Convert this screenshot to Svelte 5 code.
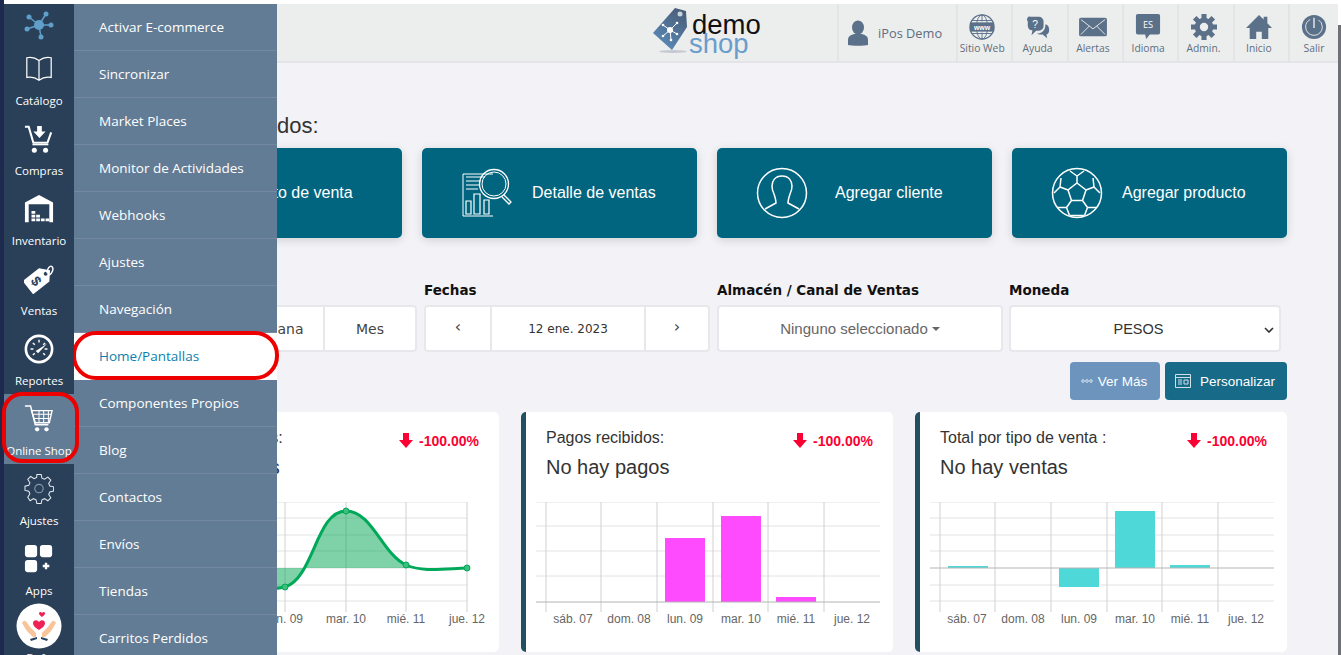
<script>
  const rail = [
    { label: 'Catálogo', icon: 'book' },
    { label: 'Compras', icon: 'buy' },
    { label: 'Inventario', icon: 'store' },
    { label: 'Ventas', icon: 'tag' },
    { label: 'Reportes', icon: 'gauge' },
    { label: 'Online Shop', icon: 'cart', active: true },
    { label: 'Ajustes', icon: 'gear' },
    { label: 'Apps', icon: 'apps' }
  ];

  const submenu = [
    'Activar E-commerce',
    'Sincronizar',
    'Market Places',
    'Monitor de Actividades',
    'Webhooks',
    'Ajustes',
    'Navegación',
    'Home/Pantallas',
    'Componentes Propios',
    'Blog',
    'Contactos',
    'Envíos',
    'Tiendas',
    'Carritos Perdidos'
  ];

  const topItems = [
    { label: 'Sitio Web', icon: 'globe' },
    { label: 'Ayuda', icon: 'help' },
    { label: 'Alertas', icon: 'mail' },
    { label: 'Idioma', icon: 'lang' },
    { label: 'Admin.', icon: 'cog' },
    { label: 'Inicio', icon: 'home' },
    { label: 'Salir', icon: 'power' }
  ];

  const shortcuts = [
    { label: 'Punto de venta', icon: 'pos' },
    { label: 'Detalle de ventas', icon: 'report' },
    { label: 'Agregar cliente', icon: 'user' },
    { label: 'Agregar producto', icon: 'ball' }
  ];

  const days = ['sáb. 07', 'dom. 08', 'lun. 09', 'mar. 10', 'mié. 11', 'jue. 12'];
  const lineX = [32, 92.5, 153, 214, 274, 335];
  const barTicks = [47, 103, 159, 215, 270, 326];
  const barGrid = [20, 75, 131, 187, 242, 298];

  const charts = [
    { title: 'Ventas realizadas:', empty: 'No hay ventas', kind: 'line' },
    {
      title: 'Pagos recibidos:',
      empty: 'No hay pagos',
      kind: 'bars',
      color: '#fd4bfd',
      bars: [[139, 36, 64], [195, 14, 86], [250, 95, 5]],
      lines: [0, 24, 49, 74],
      base: 100
    },
    {
      title: 'Total por tipo de venta :',
      empty: 'No hay ventas',
      kind: 'bars',
      color: '#4fd8d8',
      bars: [[28, 64, 2], [139, 66, 19], [195, 9, 57], [250, 63, 3]],
      lines: [0, 16, 33, 49, 83, 99],
      base: 66
    }
  ];

  const curve = 'M32 66C60 66 70 70 92 78C110 85 130 90 153 85C182 76 184 9 214 9C240 9 250 52 274 63C290 70 310 67 335 66';
  const ballLines = 'M25 15l9 7-3.500 10.500h-11L16 22zM25 15V8M34 22l8-3M30.500 32.500l5 7M19.500 32.500l-5 7M16 22l-8-3M25 8l-7-5M25 8l7-5M42 19l-1-9M42 19l6 6M8 19l1-9M8 19l-6 6M35.500 39.500H45M14.500 39.500H5M35.500 39.500l-3 8M14.500 39.500l3 8M18 47.500h14';
</script>

<div class="page">
  <div class="edge"></div>
  <div class="edge-right"></div>

  <nav class="rail">
    <svg class="logo" viewBox="0 0 32 32" width="32" height="32">
      <g stroke="#5f9fca" stroke-width="1.500">
        <line x1="16" y1="16" x2="23" y2="5" />
        <line x1="16" y1="16" x2="6" y2="8" />
        <line x1="16" y1="16" x2="28" y2="16" />
        <line x1="16" y1="16" x2="4" y2="20" />
        <line x1="16" y1="16" x2="18" y2="28" />
      </g>
      <g fill="#5f9fca">
        <circle cx="16" cy="16" r="5" />
        <circle cx="23" cy="5" r="2.500" />
        <circle cx="6" cy="8" r="2.500" />
        <circle cx="28" cy="16" r="2.500" />
        <circle cx="4" cy="20" r="2.500" />
        <circle cx="18" cy="28" r="2.500" />
      </g>
    </svg>

    {#each rail as item}
      <div class="rail-item" class:active={item.active}>
        <svg viewBox="0 0 32 32" width="30" height="30">
          {#if item.icon === 'book'}
            <path d="M16 7C12 4 7 3 3 4v21c5-1 9 0 13 3 4-3 8-4 13-3V4c-4-1-9 0-13 3zM16 7v21" fill="none" stroke="#fff" stroke-width="1.300" />
          {:else if item.icon === 'buy'}
            <path d="M1 3h4l5 17h15l4-11" fill="none" stroke="#fff" stroke-width="2.200" />
            <path d="M14 2h5v6h4l-6.500 7L10 8h4z" fill="#fff" />
            <path d="M9 22h17" stroke="#fff" stroke-width="1.500" />
            <circle cx="11" cy="28" r="2.700" fill="#fff" />
            <circle cx="23" cy="28" r="2.700" fill="#fff" />
          {:else if item.icon === 'store'}
            <path d="M1 30V9L16 1l15 8v21h-4V11H5v19z" fill="#fff" />
            <path d="M8 18h4v3H8zM8 22h4v3H8zM8 26h4v3H8zM13 22h4v3h-4zM13 26h4v3h-4zM18 26h4v3h-4zM23 26h4v3h-4z" fill="#fff" />
          {:else if item.icon === 'tag'}
            <g transform="rotate(-38 16 16)">
              <path d="M31 16l-8-9H1v18h22z" fill="#fff" />
              <circle cx="25" cy="16" r="2" fill="#2a4058" />
              <text x="12" y="21" font-size="15" font-weight="700" fill="#2a4058" text-anchor="middle" font-family="Liberation Sans, sans-serif" transform="rotate(90 12 16)">$</text>
            </g>
            <path d="M25 10c-1-5 3-9 5-7 2 2 0 7-3 9" fill="none" stroke="#fff" stroke-width="1.600" />
          {:else if item.icon === 'gauge'}
            <circle cx="16" cy="16" r="14" fill="none" stroke="#fff" stroke-width="2.800" />
            <path d="M16 6v3M7 16h3M25 16h-3M9.500 9.500l2 2M22.500 9.500l-2 2M9.500 22.500l2-2M22.500 22.500l-2-2" stroke="#fff" stroke-width="1.500" />
            <path d="M12.500 18l12-7.500-9.500 10z" fill="#fff" />
          {:else if item.icon === 'cart'}
            <path d="M1 2h6l5 20h14" fill="none" stroke="#fff" stroke-width="1.600" />
            <path d="M8 7h22l-3 13H12z" fill="none" stroke="#fff" stroke-width="1.400" />
            <path d="M10 11h19M11 15.500h17M16 7v13M21 7v13M26 7v13" stroke="#fff" stroke-width="1.100" />
            <circle cx="14" cy="27" r="2.300" fill="#fff" />
            <circle cx="24" cy="27" r="2.300" fill="#fff" />
          {:else if item.icon === 'gear'}
            <path d="M13.500 1h5l1 4.500 3 1.300 4-2.500 3.500 3.500-2.500 4 1.300 3 4.500 1v5l-4.500 1-1.300 3 2.500 4-3.500 3.500-4-2.500-3 1.300-1 4.500h-5l-1-4.500-3-1.300-4 2.500L2.700 28l2.500-4-1.300-3L-.6 20v-5l4.500-1 1.300-3-2.500-4L6.200 3.500l4 2.500 3-1.300z" transform="translate(1.600 -.5) scale(.9)" fill="none" stroke="#e8edf2" stroke-width="1.200" />
            <circle cx="16" cy="15.500" r="4.500" fill="none" stroke="#8a9aab" stroke-width="1.200" />
          {:else if item.icon === 'apps'}
            <rect x="1" y="1" width="13" height="13" rx="3" fill="#fff" />
            <rect x="17" y="1" width="13" height="13" rx="3" fill="#fff" />
            <rect x="1" y="17" width="13" height="13" rx="3" fill="#fff" />
            <path d="M20 23.500h7M23.500 20v7" stroke="#fff" stroke-width="2.500" />
          {/if}
        </svg>
        <span>{item.label}</span>
      </div>
    {/each}

    <div class="promo">
      <svg viewBox="0 0 46 46" width="46" height="46">
        <circle cx="23" cy="23" r="22.500" fill="#fff" />
        <path d="M6 20c2 3 4 8 8 11l3 3h3v-4c-2-3-6-5-8-9-2-3-4-5-6-1zM40 20c-2 3-4 8-8 11l-3 3h-3v-4c2-3 6-5 8-9 2-3 4-5 6-1z" fill="#f8c49a" />
        <path d="M14 36l7-2v2l-6 2zM32 36l-7-2v2l6 2z" fill="#2a4058" />
        <path d="M23 27c-3-2-6-4-6-7 0-3 4-4 6-1 2-3 6-2 6 1 0 3-3 5-6 7z" fill="#ee2255" />
        <path d="M26 14c-1-1-3-2-3-3.500 0-1.500 2-2 3-.5 1-1.500 3-1 3 .5S27 13 26 14z" fill="#ee2255" />
      </svg>
      <span>Bofu</span>
    </div>
  </nav>

  <div class="workspace">
    <header class="topbar">
      <div class="brand">
        <svg viewBox="0 0 36 50" width="36" height="50">
          <defs>
            <linearGradient id="tagfill" x1="0.800" y1="0" x2="0.200" y2="1">
              <stop offset="0" stop-color="#4a5d77" />
              <stop offset="1" stop-color="#5a8dbd" />
            </linearGradient>
          </defs>
          <ellipse cx="21" cy="44.500" rx="14" ry="1.500" fill="#c6c8d2" />
          <path d="M23 1l11 3 1 16-15 23L1 26z" fill="url(#tagfill)" />
          <circle cx="28" cy="7" r="2.500" fill="#c9d3dd" />
          <g stroke="#fff" stroke-width="1">
            <line x1="18" y1="23" x2="25" y2="16" />
            <line x1="18" y1="23" x2="11" y2="18" />
            <line x1="18" y1="23" x2="25" y2="27" />
            <line x1="18" y1="23" x2="11" y2="29" />
            <line x1="18" y1="23" x2="19" y2="33" />
          </g>
          <circle cx="18" cy="23" r="3" fill="#fff" />
          <circle cx="25" cy="16" r="1.300" fill="#fff" />
          <circle cx="11" cy="18" r="1.300" fill="#fff" />
          <circle cx="25" cy="27" r="1.300" fill="#fff" />
          <circle cx="11" cy="29" r="1.300" fill="#fff" />
          <circle cx="19" cy="33" r="1.300" fill="#fff" />
        </svg>
        <div class="brand-text">
          <span class="demo">demo</span>
          <span class="shop">shop</span>
        </div>
      </div>

      <div class="top-right">
        <div class="top-user">
          <svg viewBox="0 0 20 26" width="20" height="26">
            <ellipse cx="10" cy="7.500" rx="6" ry="7" fill="#5b7089" />
            <path d="M0 25v-5c0-4 3-5 6-6h8c3 1 6 2 6 6v5c-3 1-17 1-20 0z" fill="#5b7089" />
          </svg>
          <span>iPos Demo</span>
        </div>
        {#each topItems as item}
          <div class="top-item">
            <svg viewBox="0 0 28 28" width="26" height="26">
              {#if item.icon === 'globe'}
                <circle cx="14" cy="14" r="13" fill="none" stroke="#5b7089" stroke-width="1.300" />
                <ellipse cx="14" cy="14" rx="6" ry="13" fill="none" stroke="#5b7089" />
                <path d="M14 1v7M14 20v7M3 7h22M3 21h22" stroke="#5b7089" />
                <rect x="1" y="9" width="26" height="10" fill="#5b7089" />
                <text x="14" y="17" font-size="7.500" font-weight="700" fill="#fff" text-anchor="middle" font-family="Liberation Sans, sans-serif">www</text>
              {:else if item.icon === 'help'}
                <path d="M6 3h9a5 5 0 0 1 5 5v5a5 5 0 0 1-5 5h-3l-5 5 1-5.500A5 5 0 0 1 3 13V8a3 3 0 0 1 3-5z" fill="#5b7089" />
                <path d="M22 11c3 1 4 3 4 6s-1 5-3 5l1 4-5-4h-3c-2 0-3-1-3-1 5 0 9-3 9-10z" fill="#5b7089" />
                <text x="11" y="15" font-size="11" fill="#fff" text-anchor="middle" font-family="Liberation Sans, sans-serif">?</text>
              {:else if item.icon === 'mail'}
                <rect x="-1" y="4" width="30" height="20" rx="2" fill="#5b7089" />
                <path d="M1 6l13 10L27 6M1 22l9-9M27 22l-9-9" fill="none" stroke="#eceded" stroke-width="1" />
              {:else if item.icon === 'lang'}
                <path d="M3 0h22a2 2 0 0 1 2 2v18a2 2 0 0 1-2 2H16l-4 5-1-5H3a2 2 0 0 1-2-2V2a2 2 0 0 1 2-2z" fill="#5b7089" />
                <text x="14" y="15" font-size="10" fill="#fff" text-anchor="middle" font-family="'Open Sans', sans-serif">ES</text>
              {:else if item.icon === 'cog'}
                <path d="M14 0v28M0 14h28M4 4l20 20M4 24L24 4" stroke="#5b7089" stroke-width="5.500" />
                <circle cx="14" cy="14" r="10" fill="#5b7089" />
                <circle cx="14" cy="14" r="4.500" fill="#eceded" />
              {:else if item.icon === 'home'}
                <path d="M14 1L0 15h4v12h7v-8h6v8h7V15h4l-5-5V3h-4v3z" fill="#5b7089" />
              {:else if item.icon === 'power'}
                <circle cx="14" cy="14" r="13" fill="#5b7089" />
                <circle cx="14" cy="14" r="9" fill="none" stroke="#eceded" stroke-width="1" stroke-dasharray="47 10" stroke-dashoffset="-5" transform="rotate(-90 14 14)" />
                <path d="M14 4v11" stroke="#eceded" stroke-width="1.500" />
              {/if}
            </svg>
            <span>{item.label}</span>
          </div>
        {/each}
      </div>
    </header>

    <main class="content">
      <h2>Accesos rápidos:</h2>

      <section class="shortcuts">
        {#each shortcuts as s}
          <div class="shortcut {s.icon}">
            <svg class="shortcut-icon" viewBox="0 0 52 52" width="52" height="52" fill="none" stroke="#fff">
              {#if s.icon === 'report'}
                <path d="M32 7H2v42h30" stroke-width="1" />
                <path d="M5 10h19M5 14h15M5 18h13M5 22h12" stroke-width="1" />
                <path d="M5 34h5v13H5zM13 27h6v20h-6zM23 33h5v14h-5z" stroke-width="1.200" />
                <circle cx="33" cy="17" r="14.500" stroke-width="1.300" />
                <circle cx="33" cy="17" r="12" stroke-width="1" />
                <path d="M43 28l7 7-2 2-7-7" stroke-width="1.300" />
              {:else if s.icon === 'user'}
                <circle cx="26" cy="26" r="24.500" stroke-width="1.500" />
                <path d="M26 9c-7 0-10 5-10 10 0 4 1 6 2 8 1 3 2 6 2 9l-11 6M26 9c7 0 10 5 10 10 0 4-1 6-2 8-1 3-2 6-2 9l11 6" stroke-width="1.500" />
              {:else if s.icon === 'ball'}
                <circle cx="26" cy="26" r="24.500" stroke-width="1.500" />
                <path d={ballLines} transform="translate(1 1)" stroke-width="1.500" />
              {:else}
                <path d="M6 10h40v26H6zM18 44h16M26 36v8" stroke-width="1.500" />
              {/if}
            </svg>
            <span>{s.label}</span>
          </div>
        {/each}
      </section>

      <section class="filters">
        <div class="filter f-range">
          <span class="flabel">Rango</span>
          <div class="box">
            <div class="cell">Día</div>
            <div class="cell">Semana</div>
            <div class="cell mes">Mes</div>
          </div>
        </div>
        <div class="filter f-date">
          <span class="flabel">Fechas</span>
          <div class="box">
            <div class="cell arrow">‹</div>
            <div class="cell date">12 ene. 2023</div>
            <div class="cell arrow">›</div>
          </div>
        </div>
        <div class="filter f-store">
          <span class="flabel">Almacén / Canal de Ventas</span>
          <div class="box plain">Ninguno seleccionado <i class="caret"></i></div>
        </div>
        <div class="filter f-money">
          <span class="flabel">Moneda</span>
          <div class="box plain money">
            PESOS
            <svg viewBox="0 0 10 6" width="10" height="6"><path d="M1 1l4 4 4-4" fill="none" stroke="#333" stroke-width="1.600" /></svg>
          </div>
        </div>
      </section>

      <section class="actions">
        <button class="more">
          <svg viewBox="0 0 12 4" width="12" height="4" fill="none" stroke="#d8e4ef" stroke-width="1">
            <circle cx="2" cy="2" r="1.300" />
            <circle cx="6" cy="2" r="1.300" />
            <circle cx="10" cy="2" r="1.300" />
          </svg>
          Ver Más
        </button>
        <button class="custom">
          <svg viewBox="0 0 16 14" width="16" height="14" fill="none" stroke="#cfe0e8" stroke-width="1">
            <path d="M.5.500h15v13H.5zM.5 3.500h15M3 6h4M3 8h4M3 10h4" />
            <path d="M9 6h4v4H9z" />
          </svg>
          Personalizar
        </button>
      </section>

      <section class="cards">
        {#each charts as c}
          <article class="card">
            <div class="card-top">
              <div>
                <div class="card-title">{c.title}</div>
                <div class="card-empty">{c.empty}</div>
              </div>
              <div class="delta">
                <svg viewBox="0 0 14 15" width="14" height="15"><path d="M4 0h6v7h4l-7 8-7-8h4z" fill="#fb0032" /></svg>
                -100.00%
              </div>
            </div>
            <svg class="chart" viewBox="0 0 354 135" width="354" height="135">
              {#if c.kind === 'line'}
                {#each [0, 16, 33, 49, 66, 83, 99] as y}
                  <line x1="10" x2="335" y1={y} y2={y} stroke="#e2e2e2" />
                {/each}
                {#each lineX as x}
                  <line x1={x} x2={x} y1="0" y2="110" stroke="#d0d0d0" />
                {/each}
                <path d="{curve}L32 66Z" fill="#00a651" fill-opacity="0.5" />
                <path d={curve} fill="none" stroke="#00a859" stroke-width="3" />
                {#each [[153, 85], [214, 9], [274, 63], [335, 66]] as p}
                  <circle cx={p[0]} cy={p[1]} r="3" fill="#3fbd7c" stroke="#00a859" />
                {/each}
                {#each days as d, i}
                  <text class="tick" x={lineX[i]} y="121" text-anchor="middle">{d}</text>
                {/each}
              {:else}
                {#each c.lines as y}
                  <line x1="10" x2="354" y1={y} y2={y} stroke="#e2e2e2" />
                {/each}
                {#each barGrid as x}
                  <line x1={x} x2={x} y1="0" y2="110" stroke="#d0d0d0" />
                {/each}
                {#each c.bars as b}
                  <rect x={b[0]} y={b[1]} width="40" height={b[2]} fill={c.color} />
                {/each}
                <line x1="10" x2="354" y1={c.base} y2={c.base} stroke="#b4b4b4" />
                {#each days as d, i}
                  <text class="tick" x={barTicks[i]} y="121" text-anchor="middle">{d}</text>
                {/each}
              {/if}
            </svg>
          </article>
        {/each}
      </section>
    </main>
  </div>

  <aside class="submenu">
    {#each submenu as entry}
      <div class="sub-item" class:current={entry === 'Home/Pantallas'}>{entry}</div>
    {/each}
  </aside>
</div>

<style>
  :global(body) {
    margin: 0;
    background: #fff;
    overflow: hidden;
  }

  .page {
    position: relative;
    display: flex;
    height: 655px;
    padding-top: 4px;
    box-sizing: border-box;
    overflow: hidden;
    font-family: "Liberation Sans", Arial, sans-serif;
  }

  .edge {
    position: absolute;
    left: 0;
    top: 0;
    bottom: 0;
    width: 4px;
    background: #1d2a4e;
  }

  .edge-right {
    position: absolute;
    right: 0;
    top: 25px;
    bottom: 0;
    width: 3px;
    background: #6f7076;
  }

  .rail {
    flex: none;
    position: relative;
    z-index: 3;
    width: 70px;
    margin-left: 4px;
    background: #2a4058;
    display: flex;
    flex-direction: column;
    align-items: center;
    color: #fff;
    font-family: "Open Sans", sans-serif;
    font-size: 11.500px;
  }

  .logo {
    flex: none;
    margin-top: 5px;
    margin-bottom: 3px;
  }

  .rail-item {
    flex: none;
    position: relative;
    width: 70px;
    height: 70px;
    padding-top: 10px;
    display: flex;
    flex-direction: column;
    align-items: center;
    box-sizing: border-box;
    gap: 7px;
    white-space: nowrap;
  }

  .rail-item svg {
    flex: none;
  }

  .rail-item span {
    line-height: 14px;
    margin-top: 3px;
  }

  .rail-item.active {
    background: #637c95;
  }

  .rail-item.active::after {
    content: '';
    position: absolute;
    left: -2px;
    right: -5px;
    top: -2px;
    bottom: 1px;
    border: 4px solid #ec0000;
    border-radius: 20px;
  }

  .promo {
    flex: none;
    display: flex;
    flex-direction: column;
    align-items: center;
    margin-top: -1px;
    gap: 1px;
  }

  .workspace {
    flex: 1;
    min-width: 0;
    background: #f3f2f6;
    margin-right: 3px;
  }

  .topbar {
    height: 57px;
    background: #eceded;
    border-bottom: 2px solid #e4e4e8;
    display: flex;
    align-items: stretch;
    position: relative;
  }

  .brand {
    position: absolute;
    left: 578px;
    top: 3px;
    display: flex;
    gap: 1px;
  }

  .brand-text {
    display: flex;
    flex-direction: column;
    font-size: 27.500px;
    line-height: 19px;
    padding-top: 8px;
  }

  .demo {
    color: #111;
    margin-left: 3px;
  }

  .shop {
    color: #6a9dcb;
  }

  .top-right {
    margin-left: auto;
    display: flex;
  }

  .top-user {
    width: 119px;
    display: flex;
    align-items: center;
    gap: 10px;
    padding-left: 9px;
    box-sizing: border-box;
    border-left: 2px solid #e4e4e8;
    color: #5f6d7d;
    font-family: "Open Sans", sans-serif;
    font-size: 12.800px;
  }

  .top-item {
    width: 55.330px;
    display: flex;
    flex-direction: column;
    align-items: center;
    padding: 10px 5px 0 0;
    box-sizing: border-box;
    border-left: 2px solid #e4e4e8;
    color: #5f6d7d;
    font-family: "Open Sans", sans-serif;
    font-size: 10.300px;
    gap: 1px;
    white-space: nowrap;
  }

  .top-item:last-child {
    width: 50px;
    padding-right: 0;
  }

  .top-item svg {
    overflow: visible;
  }

  .content {
    padding: 0;
  }

  h2 {
    margin: 50px 0 0;
    padding-left: 77px;
    font-weight: 400;
    font-size: 22px;
    line-height: 26px;
    color: #333;
  }

  .shortcuts {
    display: flex;
    gap: 20px;
    margin-top: 9px;
    padding-left: 53px;
  }

  .shortcut {
    flex: none;
    width: 275px;
    height: 90px;
    background: #026580;
    border-radius: 5px;
    box-shadow: 0 2px 10px rgba(0, 0, 0, 0.15);
    display: flex;
    align-items: center;
    color: #fff;
    font-size: 16px;
    box-sizing: border-box;
    padding-left: 39px;
    gap: 19px;
  }

  .shortcut.user,
  .shortcut.pos {
    gap: 27px;
  }

  .shortcut-icon {
    flex: none;
  }

  .filters {
    display: flex;
    margin-top: 44px;
    padding-left: 53px;
    font-family: "DejaVu Sans", sans-serif;
  }

  .flabel {
    display: block;
    font-weight: 700;
    color: #111;
    font-size: 13.500px;
    line-height: 17px;
    margin-bottom: 6px;
    white-space: nowrap;
  }

  .f-range {
    width: 290px;
    margin-right: 7px;
  }

  .f-date {
    width: 286px;
    margin-right: 7px;
  }

  .f-store {
    width: 286px;
    margin-right: 6px;
  }

  .f-money {
    width: 272px;
  }

  .box {
    display: flex;
    height: 47px;
    border: 2px solid #e8e8ec;
    border-radius: 4px;
    background: #fff;
    box-sizing: border-box;
    color: #444;
  }

  .box.plain {
    align-items: center;
    justify-content: center;
    font-family: "Liberation Sans", Arial, sans-serif;
    font-size: 15px;
    color: #666;
    gap: 4px;
    position: relative;
  }

  .box.money {
    color: #333;
    font-size: 14.500px;
    padding-right: 13px;
  }

  .money svg {
    position: absolute;
    right: 5px;
    top: 20px;
  }

  .caret {
    display: inline-block;
    border-top: 4px solid #666;
    border-left: 4px solid transparent;
    border-right: 4px solid transparent;
  }

  .cell {
    display: flex;
    align-items: center;
    justify-content: center;
    flex: 1;
    border-left: 2px solid #e8e8ec;
    font-size: 14px;
  }

  .cell:first-child {
    border-left: 0;
  }

  .cell.mes {
    flex: none;
    width: 92px;
    box-sizing: border-box;
  }

  .cell.arrow {
    flex: none;
    width: 64px;
    font-size: 16px;
    padding-bottom: 4px;
    box-sizing: border-box;
  }

  .cell.date {
    font-size: 12px;
    color: #333;
  }

  .actions {
    display: flex;
    justify-content: flex-end;
    gap: 5px;
    margin-top: 10px;
    width: 1213px;
  }

  .actions button {
    height: 38px;
    border: 0;
    border-radius: 4px;
    color: #fff;
    font-family: "Liberation Sans", Arial, sans-serif;
    font-size: 14px;
    display: flex;
    align-items: center;
    justify-content: center;
  }

  .actions .more {
    width: 90px;
    background: #6c94bd;
    gap: 5px;
    font-size: 13.500px;
    padding-right: 8px;
  }

  .actions .custom {
    width: 122px;
    background: #176a88;
    gap: 9px;
    font-size: 13.500px;
    padding-right: 8px;
  }

  .cards {
    display: flex;
    gap: 22px;
    margin-top: 12px;
    padding-left: 53px;
    width: 1160px;
  }

  .card {
    flex: none;
    width: 372px;
    height: 240px;
    background: #fff;
    border-left: 5px solid #234f63;
    border-radius: 5px;
    box-sizing: border-box;
    position: relative;
  }

  .card-top {
    display: flex;
    justify-content: space-between;
    padding: 17px 20px 0 20px;
  }

  .card-title {
    font-size: 16px;
    line-height: 18px;
    color: #333;
  }

  .card-empty {
    font-size: 20px;
    line-height: 22px;
    margin-top: 9px;
    color: #333;
  }

  .delta {
    display: flex;
    align-items: flex-start;
    gap: 6px;
    color: #fb0032;
    font-size: 14px;
    font-weight: 700;
    line-height: 16px;
    padding-top: 4px;
  }

  .chart {
    display: block;
    position: absolute;
    left: 0;
    top: 90px;
  }

  .tick {
    font-size: 12px;
    fill: #666;
  }

  .submenu {
    position: absolute;
    z-index: 2;
    left: 74px;
    top: 4px;
    width: 203px;
    bottom: 0;
    background: #637c95;
    color: #fff;
    font-family: "Open Sans", sans-serif;
    font-size: 13.500px;
  }

  .sub-item {
    height: 47px;
    box-sizing: border-box;
    border-bottom: 1px solid #74899f;
    padding-left: 25px;
    display: flex;
    align-items: center;
    white-space: nowrap;
    position: relative;
  }

  .sub-item.current {
    background: #fff;
    color: #0e7fad;
    border-bottom-color: #fff;
  }

  .sub-item.current::after {
    content: '';
    position: absolute;
    left: -2px;
    right: -2px;
    top: -2px;
    bottom: -1px;
    border: 4px solid #ec0000;
    border-radius: 24px;
  }
</style>
